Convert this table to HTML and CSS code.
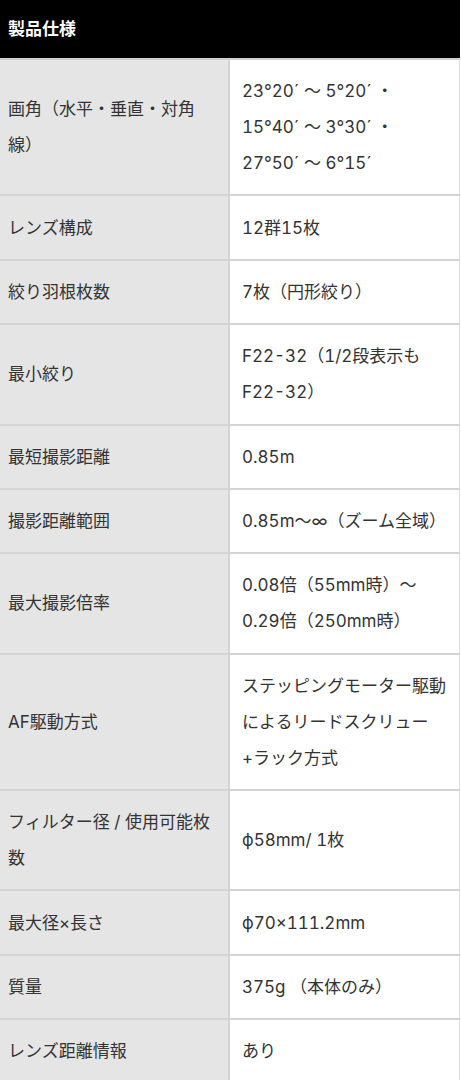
FILE: index.html
```html
<!DOCTYPE html>
<html lang="ja">
<head>
<meta charset="utf-8">
<link rel="stylesheet" href="styles.css">
</head>
<body>
<div class="spec">
  <div class="spec-title">製品仕様</div>
  <table class="spec-table">
    <tr><th>画角（水平・垂直・対角線）</th><td>23°20´ ～ 5°20´ ・<br>15°40´ ～ 3°30´ ・<br>27°50´ ～ 6°15´</td></tr>
    <tr><th>レンズ構成</th><td>12群15枚</td></tr>
    <tr><th>絞り羽根枚数</th><td>7枚（円形絞り）</td></tr>
    <tr><th>最小絞り</th><td>F22-32（1/2段表示もF22-32）</td></tr>
    <tr><th>最短撮影距離</th><td>0.85m</td></tr>
    <tr><th>撮影距離範囲</th><td>0.85m〜∞（ズーム全域）</td></tr>
    <tr><th>最大撮影倍率</th><td>0.08倍（55mm時）〜<br>0.29倍（250mm時）</td></tr>
    <tr><th>AF駆動方式</th><td>ステッピングモーター駆動によるリードスクリュー+ラック方式</td></tr>
    <tr><th>フィルター径 / 使用可能枚数</th><td>ϕ58mm/ 1枚</td></tr>
    <tr><th>最大径×長さ</th><td>ϕ70×111.2mm</td></tr>
    <tr><th>質量</th><td>375g （本体のみ）</td></tr>
    <tr><th>レンズ距離情報</th><td>あり</td></tr>
  </table>
</div>
</body>
</html>
```
FILE: styles.css
```css
html, body {
  margin: 0;
  padding: 0;
  background: #fff;
}
body {
  font-family: Inter, "Noto Sans CJK JP", sans-serif;
  font-variant-numeric: tabular-nums;
  color: #333;
  text-spacing-trim: space-all;
}
.spec {
  width: 460px;
}
.spec-title {
  background: #000;
  color: #fff;
  font-weight: bold;
  font-size: 17px;
  height: 58px;
  line-height: 58px;
  padding-left: 8px;
  border-bottom: 2px solid #cfcfcf;
}
.spec-table {
  width: 460px;
  border-collapse: collapse;
  table-layout: fixed;
  font-size: 17px;
  line-height: 36px;
}
.spec-table th,
.spec-table td {
  border-bottom: 2px solid #d4d4d4;
  text-align: left;
  vertical-align: middle;
  font-weight: normal;
  padding: 13.2px 8px 13.2px;
}
.spec-table th {
  width: 212px;
  background: #e5e5e5;
  border-right: 2px solid #d4d4d4;
}
.spec-table td {
  padding-left: 12px;
  padding-right: 10px;
  border-right: 1px solid #e0e0e0;
}
.spec-table tr:last-child th,
.spec-table tr:last-child td {
  border-bottom: none;
}
```
